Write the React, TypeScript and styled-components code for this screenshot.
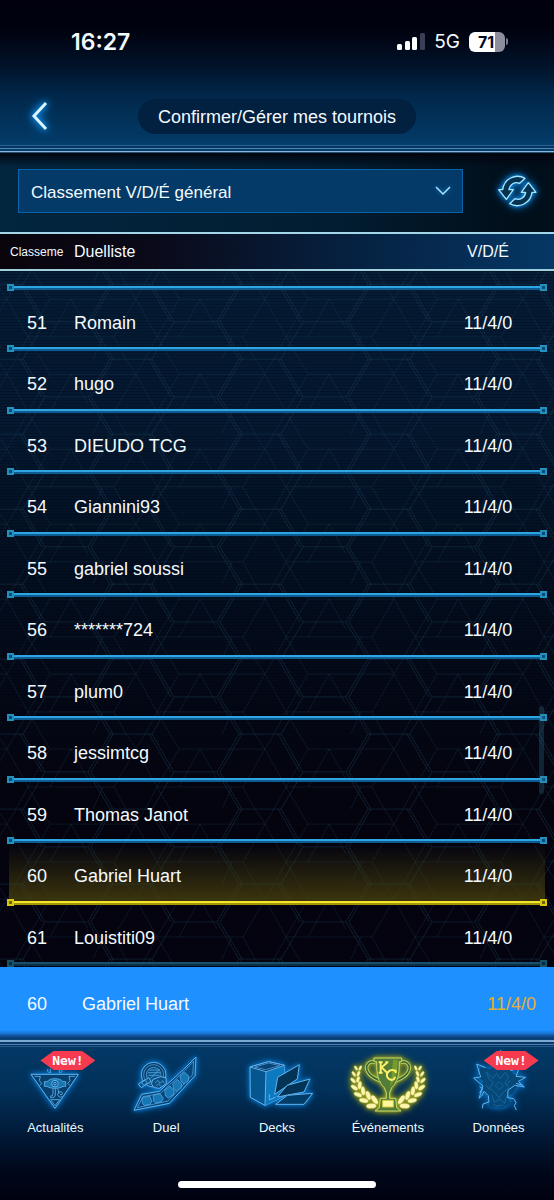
import React from "react";
import styled, { createGlobalStyle, css } from "styled-components";

const GlobalStyle = createGlobalStyle`
  *, *::before, *::after { box-sizing: border-box; }
  html, body { margin: 0; background: #00000f; }
  body { font-family: "Liberation Sans", Arial, Helvetica, sans-serif; color: #f4fbff; }
  button, select { font: inherit; color: inherit; }
`;

const Screen = styled.div`
  display: flex;
  flex-direction: column;
  min-height: 100vh;
`;

/* ---------- header ---------- */

const Header = styled.header`
  height: 153px;
  display: flex;
  flex-direction: column;
  justify-content: space-between;
  background: linear-gradient(#00000f 0px, #00020f 30px, #011228 65px, #01274a 95px, #033a66 140px, #04406f 145px);
`;

const Rails = styled.div<{ $flip?: boolean }>`
  height: 8px;
  background: ${(p) =>
    p.$flip
      ? "linear-gradient(#0b4478 0 1px, #7aa8d0 1px 3px, #08386a 3px 5px, #4d80ac 5px 6px, #043463 6px 7px, #22598a 7px 8px)"
      : "linear-gradient(#2c6390 0 1px, #043463 1px 3px, #4d86b0 3px 4px, #063a68 4px 6px, #86b8da 6px 7px, #24506f 7px 8px)"};
`;

const StatusBar = styled.div`
  display: flex;
  align-items: center;
  height: 83px;
  padding: 0 46px 0 71px;
  font-family: Inter, "Liberation Sans", sans-serif;
`;

const Clock = styled.time`
  font-size: 23px;
  font-weight: 600;
  margin-right: auto;
`;

const Network = styled.span`
  font-size: 19px;
  font-weight: 400;
  margin: 0 9px 0 8px;
`;

const Battery = styled.span`
  display: flex;
  align-items: center;
  justify-content: center;
  width: 36px;
  height: 20px;
  padding-right: 2px;
  border-radius: 6px;
  font-size: 16px;
  font-weight: 700;
  color: #05071a;
  background: linear-gradient(90deg, #fff 71%, #8c8e9e 71%);
`;

const BatteryTip = styled.span`
  width: 2px;
  height: 7px;
  margin-left: 1px;
  border-radius: 0 2px 2px 0;
  background: #777a8c;
`;

const TitleRow = styled.div`
  flex: 1;
  display: grid;
  grid-template-columns: 1fr auto 1fr;
  align-items: center;
  padding: 4px 22px 0;
`;

const BackButton = styled.button`
  justify-self: start;
  display: grid;
  place-items: center;
  width: 36px;
  height: 36px;
  padding: 0;
  border: 0;
  background: none;
  svg { filter: drop-shadow(0 0 3px #14a0ff) drop-shadow(0 0 5px #0a80e0); overflow: visible; }
`;

const Title = styled.h1`
  margin: 0;
  min-width: 278px;
  padding: 1px 17px 0;
  line-height: 34px;
  border-radius: 18px;
  text-align: center;
  font-size: 18px;
  font-weight: 400;
  background: #02203f;
`;

/* ---------- filter ---------- */

const FilterBar = styled.div`
  display: flex;
  align-items: center;
  gap: 34px;
  height: 79px;
  padding: 0 17px 3px 18px;
  background:
    linear-gradient(rgba(0, 4, 14, 0.95), rgba(0, 4, 14, 0) 14px),
    linear-gradient(90deg, #02263f, #021d31 60%, #010f1b 92%);
`;

const SelectBox = styled.div`
  position: relative;
  flex: 1;
  svg {
    position: absolute;
    right: 13px;
    top: 17px;
    pointer-events: none;
    overflow: visible;
    filter: drop-shadow(0 0 2px #0f80d0);
  }
`;

const Select = styled.select`
  display: block;
  appearance: none;
  width: 100%;
  height: 44px;
  padding: 2px 40px 0 12px;
  border: 1px solid #0a62ab;
  border-radius: 0;
  background: #033a68;
  font-size: 17px;
`;

const RefreshButton = styled.button`
  width: 40px;
  height: 36px;
  padding: 0;
  border: 0;
  background: none;
  svg { display: block; overflow: visible; filter: drop-shadow(0 0 2px #0d90f0) drop-shadow(0 0 4px #0870c0); }
`;

/* ---------- ranking ---------- */

const Board = styled.main`
  position: relative;
  flex: 1;
  height: 735px;
  overflow: hidden;
  background: linear-gradient(#051c36 40px, #04182f 200px, #030c1c 380px, #04040f 560px, #040310);
`;

const HexBackdrop = styled.svg`
  position: absolute;
  inset: 0;
  width: 100%;
  height: 100%;
`;

const Scanlines = styled.div`
  position: absolute;
  inset: 0;
  background: repeating-linear-gradient(rgba(0, 0, 8, 0.24) 0 1px, transparent 1px 3px);
`;

const ScrollThumb = styled.div`
  position: absolute;
  top: 474px;
  right: 10px;
  width: 5px;
  height: 88px;
  border-radius: 3px;
  background: rgba(50, 130, 160, 0.25);
`;

const Table = styled.table`
  position: relative;
  display: block;
`;

const HeadSection = styled.thead`
  display: block;
`;

const Body = styled.tbody`
  display: block;
`;

const columns = css`
  display: grid;
  grid-template-columns: 64px 1fr 132px;
  align-items: center;
`;

const HeadRow = styled.tr`
  ${columns}
  height: 39px;
  border-top: 2px solid #a4d6ea;
  border-bottom: 2px solid #9fcfdc;
  background: linear-gradient(90deg, #0a040b, #0a0a1a 28%, #06203f 62%, #053765);
`;

const HeadCell = styled.th<{ $small?: boolean; $center?: boolean }>`
  padding: ${(p) => (p.$center ? "0" : "0 0 0 10px")};
  font-weight: 400;
  font-size: ${(p) => (p.$small ? 12 : 16)}px;
  text-align: ${(p) => (p.$center ? "center" : "left")};
`;

const tones = {
  blue: { line: "#2fa5e3", edge: "#0c5c91", cap: "#2391bd", core: "#0c4a78" },
  gold: { line: "#f5e52c", edge: "#a49508", cap: "#d8c70c", core: "#6e6508" },
  dim: { line: "#16506f", edge: "#0b2f48", cap: "#155268", core: "#062a40" },
};
type Tone = keyof typeof tones;

const Row = styled.tr<{ $tone: Tone }>`
  ${columns}
  position: relative;
  height: 61px;
  background: ${(p) =>
    p.$tone === "gold"
      ? "linear-gradient(rgba(70, 60, 8, 0), rgba(74, 66, 12, 0.8) 58px, transparent 58px) 9px 0 / calc(100% - 18px) 100% no-repeat"
      : "none"};

  &:nth-child(odd) { height: 62px; }
  &:first-child { height: 20px; }

  &::after {
    content: "";
    position: absolute;
    left: 7px;
    right: 7px;
    bottom: 0;
    height: 7px;
    background: ${({ $tone }) => {
      const t = tones[$tone];
      return `
        linear-gradient(${t.core}, ${t.core}) 2px 2px / 3px 3px no-repeat,
        linear-gradient(${t.core}, ${t.core}) calc(100% - 2px) 2px / 3px 3px no-repeat,
        linear-gradient(${t.cap}, ${t.cap}) 0 0 / 7px 7px no-repeat,
        linear-gradient(${t.cap}, ${t.cap}) 100% 0 / 7px 7px no-repeat,
        linear-gradient(${t.line} 0 2px, ${t.edge} 2px 4px) 0 2px / 100% 4px no-repeat`;
    }};
  }
`;

const Cell = styled.td<{ $kind?: "rank" | "score" }>`
  padding: ${(p) => (p.$kind === "rank" ? "2px 0 0 27px" : p.$kind === "score" ? "2px 0 0" : "2px 0 0 10px")};
  font-size: 18px;
  line-height: 22px;
  text-align: ${(p) => (p.$kind === "score" ? "center" : "left")};
`;

const OwnRank = styled.section`
  display: flex;
  align-items: center;
  height: 72px;
  padding: 3px 18px 0 27px;
  font-size: 18px;
  background: linear-gradient(#1e90ff 63px, #1a78d8 66px, #0f4f95 69px, #0a3468);
`;

const OwnPosition = styled.span`
  width: 55px;
`;

const OwnName = styled.span`
  flex: 1;
`;

const OwnScore = styled.span`
  color: #e5b02a;
`;

/* ---------- navigation ---------- */

const Footer = styled.footer`
  display: flex;
  flex-direction: column;
  height: 161px;
  background: linear-gradient(#033a68 0, #02315a 50px, #011a38 95px, #00081c 130px, #00010f);
`;

const Nav = styled.nav`
  display: grid;
  grid-template-columns: repeat(5, 1fr);
`;

const NavLink = styled.a`
  position: relative;
  display: flex;
  flex-direction: column;
  align-items: center;
  padding-top: 3px;
  font-size: 13px;
  line-height: 20px;
  color: #eafaff;
  text-decoration: none;
`;

const NavIcon = styled.svg<{ $gold?: boolean }>`
  width: 72px;
  height: 65px;
  margin-bottom: 3px;
  overflow: visible;
  fill: none;
  stroke: ${(p) => (p.$gold ? "#c9d96a" : "#62b4ee")};
  stroke-width: 3;
  stroke-linejoin: round;
  filter: drop-shadow(0 0 2px ${(p) => (p.$gold ? "#a8b020" : "#0878d0")}) drop-shadow(0 0 3px ${(p) => (p.$gold ? "#6d7a18" : "#0560a8")});
`;

const NewBadge = styled.span`
  position: absolute;
  top: 4px;
  left: calc(50% - 15px);
  width: 55px;
  height: 19px;
  font: bold 13px/19px "DejaVu Sans Mono", "Liberation Mono", monospace;
  text-align: center;
  color: #fff;
  background: #f63a50;
  clip-path: polygon(0 50%, 24% 0, 76% 0, 100% 50%, 76% 100%, 24% 100%);
`;

const HomeIndicator = styled.div`
  width: 198px;
  height: 7px;
  margin: auto auto 12px;
  border-radius: 4px;
  background: #fff;
`;

/* ---------- drawings ---------- */

const Signal = () => (
  <svg width="29" height="19" viewBox="0 0 29 19" fill="#fff" aria-hidden="true">
    <rect x="0" y="12" width="5" height="6" rx="1.5" />
    <rect x="8" y="9" width="5" height="9" rx="1.5" />
    <rect x="15" y="5" width="5" height="13" rx="1.5" />
    <rect x="23" y="1" width="5" height="17" rx="1.5" fill="#3b3f55" />
  </svg>
);

const Refresh = () => {
  const arrow = "M743 84C714 68 680 86 676 118H664L687 147L708 118H695C697 103 712 92 727 99Z";
  return (
    <svg width="40" height="36" viewBox="659 68 120 108" aria-hidden="true">
      <g fill="#04324f" stroke="#a4e6ff" strokeWidth="4" strokeLinejoin="round">
        <path d={arrow} />
        <path d={arrow} transform="rotate(180 720 122)" />
      </g>
    </svg>
  );
};

const HexPattern = () => (
  <HexBackdrop aria-hidden="true">
    <defs>
      <pattern id="hex" x="88" y="52" width="129" height="75" patternUnits="userSpaceOnUse">
        <g fill="none" stroke="#1c4560" strokeWidth="1">
          <path opacity=".42" d="M22 0H64L86 38L64 75H22L0 38ZM86 38H129M25 0L3 38M61 0L83 38M3 38L25 75" />
          <path opacity=".28" d="M0 15H48M48 15L69 53H129M48 15L26 53H0M69 53L91 15H129M26 53L38 75M38 0L48 15M69 53L57 75M57 0L48 15M91 15L82 0M82 75L69 53M5 75L15 53M112 15L91 53M112 15L129 45" />
        </g>
      </pattern>
    </defs>
    <rect width="100%" height="100%" fill="url(#hex)" />
  </HexBackdrop>
);

const NewsIcon = () => (
  <NavIcon viewBox="58 45 216 195" aria-hidden="true">
    <path fill="#07406f" d="M94 118H236L166 220Z" />
    <path strokeWidth="2.5" d="M105 124H122L119 137L126 145L121 151M226 124H208L211 137L204 145L210 151M153 194H180L166 212Z" />
    <path fill="#1874ac" strokeWidth="2.5" d="M134 140H142C152 128 180 128 190 140H198V154H190C180 162 152 162 142 154H134Z" />
    <circle cx="166" cy="146" r="10" fill="#0c5488" />
    <circle cx="166" cy="146" r="4" />
    <path strokeWidth="2.5" d="M160 161V176Q160 185 151 184M167 161V180Q167 189 151 188M174 161L178 176M188 184A8 8 0 1 1 187 172A4 4 0 1 1 181 177M144 102Q142 110 149 114M152 101V114M179 101V114M187 102Q189 110 183 114" />
  </NavIcon>
);

const DuelIcon = () => (
  <NavIcon viewBox="390 45 216 195" aria-hidden="true">
    <circle cx="461" cy="119" r="37" fill="#083f6c" />
    <circle cx="461" cy="119" r="30" strokeWidth="2" />
    <circle cx="461" cy="119" r="22" fill="#0c5488" strokeWidth="2" />
    <path strokeWidth="2" d="M446 105H478M444 113H480M446 121H478M452 130L478 103" />
    <path fill="#0a568c" d="M415 147L446 128L453 139L424 158Z" />
    <circle cx="433" cy="143" r="7" strokeWidth="2" />
    <path fill="#0b4f83" d="M459 133L481 125L498 128L499 146L478 160L462 158L454 146Z" />
    <path strokeWidth="2" d="M465 144L474 136L480 145L488 137L493 145M468 154L476 146L482 154" />
    <path fill="#05477c" d="M402 226L425 178L478 169L550 104L588 66L585 122L508 205Z" />
    <path strokeWidth="2" d="M412 218L429 185L481 175L552 109L581 79L578 119L504 198Z" />
    <path fill="#1777b4" strokeWidth="2" d="M426 188L449 183L456 199L450 208L433 212L427 205ZM459 181L480 176L490 190L484 201L467 204L461 198ZM494 166L510 153L523 168L520 180L505 189L497 183ZM518 146L532 133L545 147L543 159L529 169L521 162ZM540 124L553 111L566 123L565 138L552 147L543 139Z" />
  </NavIcon>
);

const DecksIcon = () => (
  <NavIcon viewBox="63 45 216 195" aria-hidden="true">
    <path fill="#05558f" d="M90 96L146 80L193 91L192 184L135 211L91 187Z" />
    <path fill="#0c79c0" stroke="none" d="M138 110L193 91L192 184L136 211Z" />
    <path fill="#04325b" d="M90 96L146 80L193 91L138 110Z" />
    <path fill="#064274" strokeWidth="2" d="M104 96L146 84L179 92L137 104Z" />
    <path d="M138 110L135 211M148 177V195L167 186" />
    <path fill="#033456" d="M164 178L173 127L238 89L232 132Z" />
    <path fill="#033456" d="M172 186L201 151L270 132L252 171Z" />
    <path fill="#033c66" d="M167 208L202 181L278 175L252 208Z" />
  </NavIcon>
);

const laurelNodes = [
  [414, 99, 8, -2],
  [408, 116, 9, -6],
  [406, 134, 10, -14],
  [410, 153, 12, -26],
  [420, 172, 13, -38],
  [436, 188, 14, -50],
  [456, 203, 15, -64],
];

const Laurel = () => (
  <g fill="#fdf6b0" stroke="#b5b338" strokeWidth="1">
    {laurelNodes.map(([x, y, r, a]) => (
      <g key={y} transform={`translate(${x} ${y}) rotate(${a})`}>
        <ellipse cx={-r * 0.65} cy="-3" rx={r * 0.48} ry={r} transform="rotate(-30)" />
        <ellipse cx={r * 0.75} cy="-3" rx={r * 0.48} ry={r} transform="rotate(30)" />
      </g>
    ))}
  </g>
);

const TrophyIcon = () => (
  <NavIcon $gold viewBox="396 45 216 195" aria-hidden="true">
    <Laurel />
    <g transform="translate(1008 0) scale(-1 1)">
      <Laurel />
    </g>
    <path stroke="#c9d96a" strokeWidth="10" d="M466 82C444 76 435 94 443 110C450 124 464 130 482 138M542 82C564 76 573 94 565 110C558 124 544 130 526 138" />
    <path stroke="#3c6b35" strokeWidth="5" d="M466 82C444 76 435 94 443 110C450 124 464 130 482 138M542 82C564 76 573 94 565 110C558 124 544 130 526 138" />
    <path fill="#537c38" d="M462 69H545V80H538C539 118 532 143 515 158L509 174V190H527L530 218L543 228H465L478 218L481 190H499V174L493 158C476 143 469 118 470 80H462Z" />
    <path fill="#769c2c" stroke="none" d="M519 74H533C534 112 526 136 512 151L508 165Q517 120 519 74Z" />
    <rect x="488" y="196" width="32" height="20" fill="#fff79c" stroke="#d8ca3c" />
    <path stroke="#fff06a" strokeWidth="6" strokeLinejoin="miter" d="M482 82V113M476 82H488M476 113H488M501 83L485 97L502 114M496 82H505" />
    <path stroke="#fff06a" strokeWidth="6" d="M527 110Q520 102 509 107Q497 115 502 127Q509 138 521 133L526 126M527 104V114" />
  </NavIcon>
);

const DataIcon = () => (
  <NavIcon viewBox="87 45 216 195" aria-hidden="true">
    <path fill="#07446f" stroke="none" opacity=".9" d="M140 96L168 103L180 92L200 96L225 92L238 118L270 126L250 150L240 172L222 184L228 207L205 218L166 216L165 188L145 166L147 138L132 126Z" />
    <path stroke="#1876ac" strokeWidth="2" d="M157 111L177 130L188 115L199 132L213 112L224 126L213 144L225 158L207 172L196 188L181 171L166 158L178 143L164 130ZM196 140L208 151L196 165L184 151ZM173 180L181 202L197 192L212 205L218 182M178 208L188 213L207 210M155 150L168 165M229 136L217 151" />
    <path d="M154 98L128 87L140 126L119 129L147 153L135 190L143 183L150 169L163 182L165 201L147 207L145 220M200 45V53M229 107L255 100L246 124L275 127L253 139L271 156L242 151L222 166L221 188L239 191L246 203L241 212L247 225" />
    <path d="M137 155L145 161L137 174M246 145L266 151" />
  </NavIcon>
);

/* ---------- data ---------- */

const SCORE = "11/4/0";
const players = [
  "Romain",
  "hugo",
  "DIEUDO TCG",
  "Giannini93",
  "gabriel soussi",
  "*******724",
  "plum0",
  "jessimtcg",
  "Thomas Janot",
  "Gabriel Huart",
  "Louistiti09",
].map((name, i) => ({ rank: 51 + i, name }));

const toneOf = (rank: number): Tone => (rank === 60 ? "gold" : rank === 61 ? "dim" : "blue");

const tabs = [
  { label: "Actualités", Icon: NewsIcon, isNew: true },
  { label: "Duel", Icon: DuelIcon },
  { label: "Decks", Icon: DecksIcon },
  { label: "Événements", Icon: TrophyIcon },
  { label: "Données", Icon: DataIcon, isNew: true },
];

export default function App() {
  return (
    <Screen>
      <GlobalStyle />
      <Header>
        <StatusBar>
          <Clock>16:27</Clock>
          <Signal />
          <Network>5G</Network>
          <Battery>71</Battery>
          <BatteryTip />
        </StatusBar>
        <TitleRow>
          <BackButton aria-label="Retour">
            <svg width="16" height="28" viewBox="0 0 16 28" fill="none" stroke="#d8f6ff" strokeWidth="3">
              <path d="M14 1L2 14L14 27" />
            </svg>
          </BackButton>
          <Title>Confirmer/Gérer mes tournois</Title>
        </TitleRow>
        <Rails />
      </Header>

      <FilterBar>
        <SelectBox>
          <Select aria-label="Classement">
            <option>Classement V/D/É général</option>
          </Select>
          <svg width="14" height="9" viewBox="0 0 14 9" fill="none" stroke="#a8e4ff" strokeWidth="1.5" aria-hidden="true">
            <path d="M0 1L7 8L14 1" />
          </svg>
        </SelectBox>
        <RefreshButton aria-label="Actualiser">
          <Refresh />
        </RefreshButton>
      </FilterBar>

      <Board>
        <HexPattern />
        <Scanlines />
        <Table>
          <HeadSection>
            <HeadRow>
              <HeadCell $small>Classeme</HeadCell>
              <HeadCell>Duelliste</HeadCell>
              <HeadCell $center>V/D/É</HeadCell>
            </HeadRow>
          </HeadSection>
          <Body>
            <Row $tone="blue" />
            {players.map(({ rank, name }) => (
              <Row key={rank} $tone={toneOf(rank)}>
                <Cell $kind="rank">{rank}</Cell>
                <Cell>{name}</Cell>
                <Cell $kind="score">{SCORE}</Cell>
              </Row>
            ))}
          </Body>
        </Table>
        <ScrollThumb />
      </Board>

      <OwnRank>
        <OwnPosition>60</OwnPosition>
        <OwnName>Gabriel Huart</OwnName>
        <OwnScore>{SCORE}</OwnScore>
      </OwnRank>

      <Footer>
        <Rails $flip />
        <Nav>
          {tabs.map(({ label, Icon, isNew }) => (
            <NavLink href="#" key={label}>
              <Icon />
              {label}
              {isNew && <NewBadge>New!</NewBadge>}
            </NavLink>
          ))}
        </Nav>
        <HomeIndicator />
      </Footer>
    </Screen>
  );
}
